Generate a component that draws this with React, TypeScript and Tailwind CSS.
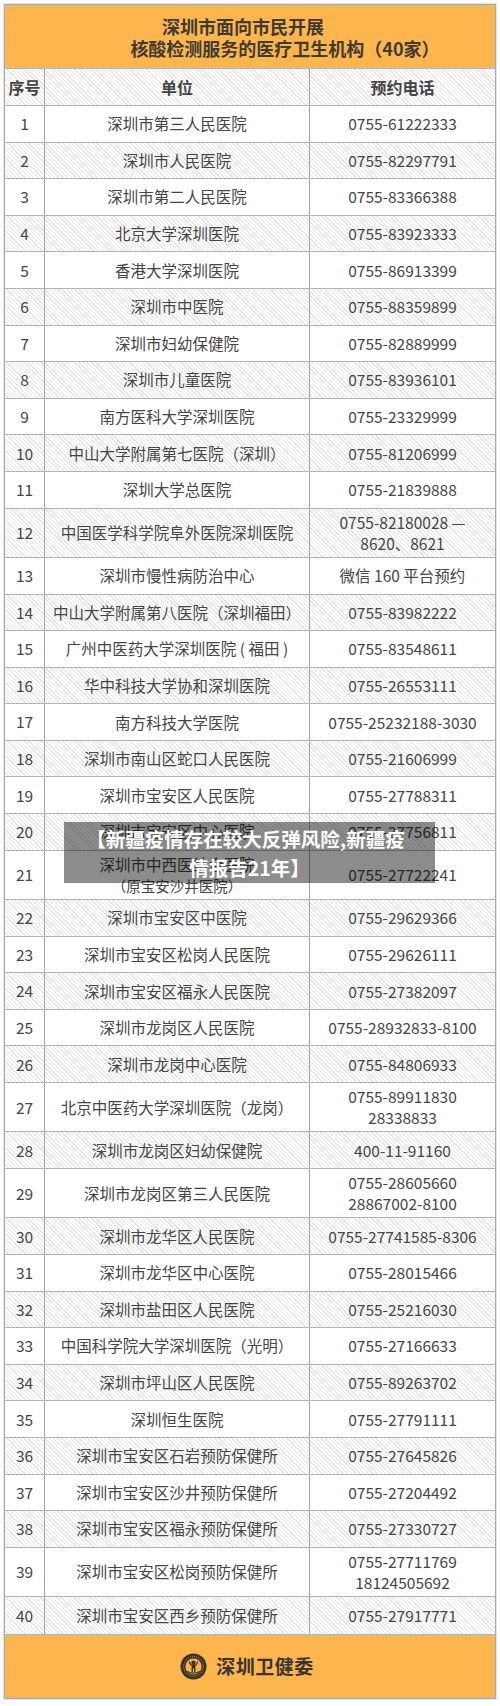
const FONT = { fontFamily: '"Noto Sans CJK SC", "Noto Sans", sans-serif' };

type Row = { no: number; name: string[]; tel: string[] };

const ROWS: Row[] = [
  { no: 1, name: ['深圳市第三人民医院'], tel: ['0755-61222333'] },
  { no: 2, name: ['深圳市人民医院'], tel: ['0755-82297791'] },
  { no: 3, name: ['深圳市第二人民医院'], tel: ['0755-83366388'] },
  { no: 4, name: ['北京大学深圳医院'], tel: ['0755-83923333'] },
  { no: 5, name: ['香港大学深圳医院'], tel: ['0755-86913399'] },
  { no: 6, name: ['深圳市中医院'], tel: ['0755-88359899'] },
  { no: 7, name: ['深圳市妇幼保健院'], tel: ['0755-82889999'] },
  { no: 8, name: ['深圳市儿童医院'], tel: ['0755-83936101'] },
  { no: 9, name: ['南方医科大学深圳医院'], tel: ['0755-23329999'] },
  { no: 10, name: ['中山大学附属第七医院（深圳）'], tel: ['0755-81206999'] },
  { no: 11, name: ['深圳大学总医院'], tel: ['0755-21839888'] },
  { no: 12, name: ['中国医学科学院阜外医院深圳医院'], tel: ['0755-82180028 —', '8620、8621'] },
  { no: 13, name: ['深圳市慢性病防治中心'], tel: ['微信 160 平台预约'] },
  { no: 14, name: ['中山大学附属第八医院（深圳福田）'], tel: ['0755-83982222'] },
  { no: 15, name: ['广州中医药大学深圳医院 ( 福田 )'], tel: ['0755-83548611'] },
  { no: 16, name: ['华中科技大学协和深圳医院'], tel: ['0755-26553111'] },
  { no: 17, name: ['南方科技大学医院'], tel: ['0755-25232188-3030'] },
  { no: 18, name: ['深圳市南山区蛇口人民医院'], tel: ['0755-21606999'] },
  { no: 19, name: ['深圳市宝安区人民医院'], tel: ['0755-27788311'] },
  { no: 20, name: ['深圳市宝安区中心医院'], tel: ['0755-27756811'] },
  { no: 21, name: ['深圳市中西医结合医院', '（原宝安沙井医院）'], tel: ['0755-27722241'] },
  { no: 22, name: ['深圳市宝安区中医院'], tel: ['0755-29629366'] },
  { no: 23, name: ['深圳市宝安区松岗人民医院'], tel: ['0755-29626111'] },
  { no: 24, name: ['深圳市宝安区福永人民医院'], tel: ['0755-27382097'] },
  { no: 25, name: ['深圳市龙岗区人民医院'], tel: ['0755-28932833-8100'] },
  { no: 26, name: ['深圳市龙岗中心医院'], tel: ['0755-84806933'] },
  { no: 27, name: ['北京中医药大学深圳医院（龙岗）'], tel: ['0755-89911830', '28338833'] },
  { no: 28, name: ['深圳市龙岗区妇幼保健院'], tel: ['400-11-91160'] },
  { no: 29, name: ['深圳市龙岗区第三人民医院'], tel: ['0755-28605660', '28867002-8100'] },
  { no: 30, name: ['深圳市龙华区人民医院'], tel: ['0755-27741585-8306'] },
  { no: 31, name: ['深圳市龙华区中心医院'], tel: ['0755-28015466'] },
  { no: 32, name: ['深圳市盐田区人民医院'], tel: ['0755-25216030'] },
  { no: 33, name: ['中国科学院大学深圳医院（光明）'], tel: ['0755-27166633'] },
  { no: 34, name: ['深圳市坪山区人民医院'], tel: ['0755-89263702'] },
  { no: 35, name: ['深圳恒生医院'], tel: ['0755-27791111'] },
  { no: 36, name: ['深圳市宝安区石岩预防保健所'], tel: ['0755-27645826'] },
  { no: 37, name: ['深圳市宝安区沙井预防保健所'], tel: ['0755-27204492'] },
  { no: 38, name: ['深圳市宝安区福永预防保健所'], tel: ['0755-27330727'] },
  { no: 39, name: ['深圳市宝安区松岗预防保健所'], tel: ['0755-27711769', '18124505692'] },
  { no: 40, name: ['深圳市宝安区西乡预防保健所'], tel: ['0755-27917771'] },
];

// faint diagonal hatching on even rows
const HATCH =
  'bg-[image:repeating-linear-gradient(45deg,#ffffff_0px,#ffffff_2px,#e5e5e5_2px,#e5e5e5_3px)]';

function Logo() {
  return (
    <svg width="27" height="27" viewBox="0 0 28 28" aria-hidden="true">
      <circle cx="14" cy="14" r="13.5" fill="#3b3226" />
      <circle cx="14" cy="14" r="10.2" fill="none" stroke="#f8b24e" strokeWidth="0.8" strokeDasharray="1 1.1" />
      <circle cx="14" cy="14" r="8.4" fill="#f8b24e" />
      <circle cx="14" cy="10.2" r="2.3" fill="#3b3226" />
      <path d="M8.8 9.2 L11 13 L12 13 L12 20 L13.4 20 L13.4 16 L14.6 16 L14.6 20 L16 20 L16 13 L17 13 L19.2 9.2 L18 8.6 L16.2 11.8 L11.8 11.8 L10 8.6 Z" fill="#3b3226" />
      <path d="M7 19.5 Q14 23.5 21 19.5 L20.2 18.6 Q14 21.8 7.8 18.6 Z" fill="#3b3226" />
    </svg>
  );
}

function TableRow({ row }: { row: Row }) {
  const tall = row.name.length > 1 || row.tel.length > 1;
  const even = row.no % 2 === 0;
  return (
    <div
      className={`grid grid-cols-[40px_265px_1fr] border-b border-[#b4b4b4] last:border-b-0 ${
        tall ? 'h-[49.4px]' : 'h-[36.6px]'
      } ${even ? HATCH : 'bg-white'}`}
    >
      <div className="flex items-center justify-center border-r border-[#a3a3a3]">{row.no}</div>
      <div className="flex flex-col items-center justify-center border-r border-[#a3a3a3] leading-[21px]">
        {row.name.map((line) => (
          <span key={line} className={row.name.length > 1 && line.startsWith('（') ? 'text-[14.5px]' : ''}>
            {line}
          </span>
        ))}
      </div>
      <div className="flex flex-col items-center justify-center leading-[21px]">
        {row.tel.map((line) => (
          <span key={line} className="whitespace-nowrap">
            {line}
          </span>
        ))}
      </div>
    </div>
  );
}

export default function App() {
  return (
    <div className="relative w-[500px] h-[1706px] bg-white px-[4px] pt-[4px]" style={FONT}>
      <div className="border border-[#a8a8a8] shadow-[0_0_0_1px_#e4e4e4] text-[15.5px] text-[#454545]">
        <div className="h-[64px] bg-[#fdb54d] border-b border-[#b8b8b8] flex flex-col items-center justify-center text-[18px] font-bold text-[#3f3a33] leading-[22px]">
          <span className="-ml-[14px]">深圳市面向市民开展</span>
          <span className="ml-[70px]">核酸检测服务的医疗卫生机构（40家）</span>
        </div>
        <div className={`grid grid-cols-[40px_265px_1fr] h-[37px] border-b border-[#b4b4b4] font-bold text-[16px] text-[#444] ${HATCH}`}>
          <div className="flex items-center justify-center border-r border-[#a3a3a3]">序号</div>
          <div className="flex items-center justify-center border-r border-[#a3a3a3]">单位</div>
          <div className="flex items-center justify-center">预约电话</div>
        </div>
        <div className="border-b border-[#b4b4b4]">
          {ROWS.map((row) => (
            <TableRow key={row.no} row={row} />
          ))}
        </div>
        <div className="h-[63px] bg-[#fdb54d] flex items-center justify-center gap-[9px] pr-[6px]">
          <Logo />
          <span className="text-[19px] font-bold text-[#3a3530] tracking-[0.5px]">深圳卫健委</span>
        </div>
      </div>

      <div className="absolute left-[64px] top-[822px] w-[371px] h-[61px] bg-black/45 flex flex-col items-center justify-center text-white font-bold text-[19.5px] leading-[29px]">
        <span className="-ml-[8px]">【新疆疫情存在较大反弹风险,新疆疫</span>
        <span>情报告21年】</span>
      </div>
    </div>
  );
}
